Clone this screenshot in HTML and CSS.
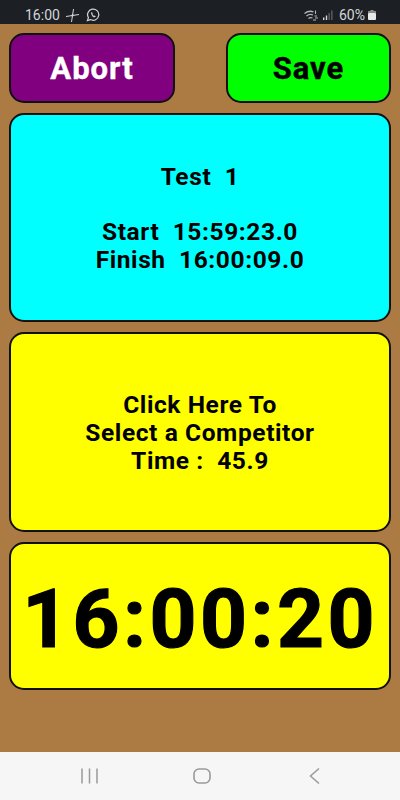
FILE: index.html
```html
<!DOCTYPE html>
<html lang="en">
<head>
    <meta charset="UTF-8">
    <meta name="viewport" content="width=device-width, initial-scale=1.0">
    <title>Timer</title>
    <link rel="stylesheet" href="styles.css">
</head>
<body>

<div class="status-bar">
    <div class="status-left">
        <span class="status-time">16:00</span>
        <svg class="icon-plane" width="15" height="15" viewBox="0 0 15 15">
            <path d="M8.5 1 L6.5 14 M1 8.5 L14 6.5" stroke="#d5d6d8" stroke-width="1" fill="none"/>
            <path d="M6 7.5 L7.5 6 L9 7 L7.5 9 Z" fill="#d5d6d8"/>
        </svg>
        <svg class="icon-chat" width="14" height="14" viewBox="0 0 15 15">
            <path d="M1.5 13.5 L2.6 10.3 A6 6 0 1 1 4.8 12.4 Z" stroke="#d5d6d8" stroke-width="1.3" fill="none"/>
            <path d="M5.5 4.5 Q5 7 7 9 Q9 10.5 10.5 9.5 L9.5 8 L8.5 8.5 L6.8 6.8 L7.2 5.8 L6.5 4.5 Z" fill="#d5d6d8"/>
        </svg>
    </div>
    <div class="status-right">
        <svg class="icon-wifi" width="16" height="11" viewBox="0 0 16 11">
            <path d="M0.5 3.5 Q5 0 9.5 2 M2.5 6 Q5.5 3.5 9 5 M4.5 8.5 Q6.5 7 8.5 8" stroke="#b4b5b7" stroke-width="1.3" fill="none"/>
            <path d="M11.5 0.5 V4 M10.5 6 H13 M11 8 H14 M9 10 H12" stroke="#b4b5b7" stroke-width="1.1"/>
        </svg>
        <svg class="icon-signal" width="10" height="10" viewBox="0 0 10 10">
            <rect x="0" y="7.5" width="1.4" height="2.5" fill="#d5d6d8"/>
            <rect x="2.8" y="5.5" width="1.4" height="4.5" fill="#d5d6d8"/>
            <rect x="5.6" y="3" width="1" height="7" fill="#77787a"/>
            <rect x="8.4" y="0.5" width="1" height="9.5" fill="#77787a"/>
        </svg>
        <span class="status-battery-text">60%</span>
        <svg class="icon-battery" width="8" height="10" viewBox="0 0 8 10">
            <rect x="2.5" y="0" width="3" height="1.5" fill="#9a9b9d"/>
            <rect x="0" y="1" width="8" height="2.5" fill="#8a8b8d"/>
            <rect x="0" y="3" width="8" height="7" rx="1" fill="#e8e8e8"/>
        </svg>
    </div>
</div>

<div class="app">
    <div class="top-row">
        <div class="btn btn-abort">Abort</div>
        <div class="btn btn-save">Save</div>
    </div>
    <div class="card card-info">
        <div class="info-title">Test&nbsp; 1</div>
        <div>Start&nbsp; 15:59:23.0</div>
        <div>Finish&nbsp; 16:00:09.0</div>
    </div>
    <div class="card card-select">
        <div>Click Here To</div>
        <div>Select a Competitor</div>
        <div>Time :&nbsp; 45.9</div>
    </div>
    <div class="card card-clock">16:00:20</div>
</div>

<div class="nav-bar">
    <svg width="17" height="16" viewBox="0 0 17 16">
        <path d="M1 0.5 V15.5 M8.5 0.5 V15.5 M16 0.5 V15.5" stroke="#9a9a9a" stroke-width="1.5"/>
    </svg>
    <svg class="nav-home" width="18" height="16" viewBox="0 0 18 16">
        <rect x="1" y="1" width="16" height="14" rx="5" stroke="#9a9a9a" stroke-width="1.6" fill="none"/>
    </svg>
    <svg class="nav-back" width="11" height="16" viewBox="0 0 11 16">
        <path d="M10 0.5 L1.5 8 L10 15.5" stroke="#9a9a9a" stroke-width="1.5" fill="none"/>
    </svg>
</div>

</body>
</html>
```

FILE: styles.css
```css
html, body {
    margin: 0;
    height: 100%;
}

body {
    display: flex;
    flex-direction: column;
    height: 800px;
    overflow: hidden;
    background-color: #ac7b43;
    font-family: Roboto, "Liberation Sans", sans-serif;
}

.status-bar {
    display: flex;
    align-items: center;
    justify-content: space-between;
    height: 24px;
    padding: 6px 24px 0 25px;
    box-sizing: border-box;
    background-color: #1c2025;
    color: #d5d6d8;
    font-size: 14px;
}

.status-left,
.status-right {
    display: flex;
    align-items: center;
}

.icon-plane {
    margin-left: 5px;
}

.icon-chat {
    margin-left: 6px;
}

.icon-signal {
    margin-left: 3px;
}

.status-battery-text {
    margin-left: 6px;
}

.icon-battery {
    margin-left: 3px;
}

.app {
    flex: 1;
    display: flex;
    flex-direction: column;
    gap: 10px;
    padding: 9px 9px 0;
}

.top-row {
    display: flex;
    justify-content: space-between;
}

.btn {
    display: flex;
    align-items: center;
    justify-content: center;
    height: 70px;
    box-sizing: border-box;
    border: 2px solid #111;
    border-radius: 15px;
    font-size: 31px;
    font-weight: bold;
    letter-spacing: 1px;
    -webkit-text-stroke: 0.4px;
}

.btn-abort {
    width: 166px;
    background-color: #800080;
    color: #fff;
}

.btn-save {
    width: 165px;
    background-color: #00ff00;
    color: #000;
}

.card {
    display: flex;
    flex-direction: column;
    align-items: center;
    justify-content: center;
    box-sizing: border-box;
    border: 2px solid #111;
    border-radius: 15px;
    color: #000;
    font-size: 24.5px;
    font-weight: bold;
    letter-spacing: 0.6px;
    line-height: 28px;
    text-align: center;
}

.card-info {
    height: 209px;
    background-color: #00ffff;
    padding-top: 2px;
}

.info-title {
    margin-bottom: 27px;
}

.card-select {
    height: 200px;
    padding-top: 2px;
    background-color: #ffff00;
}

.card-clock {
    height: 148px;
    padding-top: 5px;
    background-color: #ffff00;
    font-size: 82px;
    letter-spacing: 3.4px;
    line-height: 1;
    -webkit-text-stroke: 1.2px;
}

.nav-bar {
    display: flex;
    align-items: center;
    height: 48px;
    padding: 0 0 0 81px;
    background-color: #f6f6f6;
}

.nav-home {
    margin-left: 95px;
}

.nav-back {
    margin-left: 98px;
}
```
